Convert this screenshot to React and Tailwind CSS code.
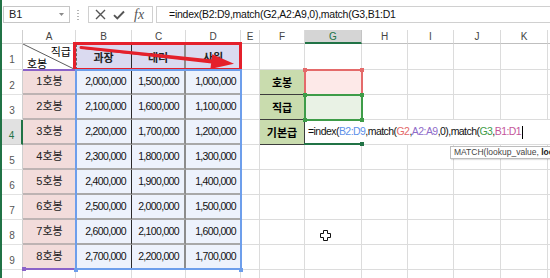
import React from "react";

const COL_LETTERS = ["A", "B", "C", "D", "E", "F", "G", "H", "I", "J", "K", ""];

const won = (n) => n.toLocaleString("en-US");

const ROWS = Array.from({ length: 8 }, (_, i) => ({
  grade: `${i + 1}호봉`,
  b: 2000000 + i * 100000,
  c: 1500000 + i * 100000,
  d: 1000000 + i * 100000,
}));

const Handle = ({ className }) => <div className={`absolute h-[4px] w-[4px] ${className}`} />;

const FormulaBar = () => (
  <div className="flex h-[30px] shrink-0 items-start pt-[6px]">
    <div className="ml-[1px] flex h-[17px] w-[67px] items-center justify-between border border-[#c6c6c6] pl-[5px] pr-[5px] text-[11px] text-[#222]">
      <span>B1</span>
      <svg width="5" height="3" viewBox="0 0 5 3">
        <path d="M0 0h5L2.5 3z" fill="#8a8a8a" />
      </svg>
    </div>
    <div className="ml-[7px] mt-[4px] flex flex-col gap-[2px]">
      <div className="h-[1px] w-[2px] bg-[#b5b5b5]" />
      <div className="h-[1px] w-[2px] bg-[#b5b5b5]" />
      <div className="h-[1px] w-[2px] bg-[#b5b5b5]" />
      <div className="h-[1px] w-[2px] bg-[#b5b5b5]" />
    </div>
    <div className="ml-[9px] flex h-[17px] w-[65px] items-center border border-[#d0d0d0] pl-[6px]">
      <svg width="11" height="11" viewBox="0 0 11 11">
        <path d="M1 1l9 9M10 1l-9 9" stroke="#555" strokeWidth="1.4" />
      </svg>
      <svg className="ml-[7px]" width="12" height="10" viewBox="0 0 12 10">
        <path d="M1 5.2l3.3 3.3L11 1.5" stroke="#555" strokeWidth="1.9" fill="none" />
      </svg>
      <span className="ml-[9px] font-['Liberation_Serif',serif] text-[14px] italic leading-none text-[#555]">fx</span>
    </div>
    <div className="ml-[3px] flex h-[17px] flex-1 items-center whitespace-nowrap border border-r-0 border-[#d0d0d0] pl-[12px] text-[10.5px] tracking-[-0.25px] text-[#111]">
      <span>=index(B2:D9,match(G2,A2:A9,0),match(G3,B1:D1</span>
    </div>
  </div>
);

const Sheet = () => {
  const grid = "border-r border-b border-[#dcdcdc]";
  const rowHead = (n) => (
    <div
      key={`rh${n}`}
      className={`flex items-center justify-center pt-[6px] text-[10px] ${
        n === 4
          ? "border-b border-r-2 border-b-[#cfcfcf] border-r-[#217346] bg-[#e1e1e1] text-[#217346]"
          : "border-r border-b border-r-[#cfcfcf] border-b-[#e2e2e2] text-[#555]"
      }`}
    >
      {n}
    </div>
  );
  const blank = (key) => <div key={key} className={`${grid} bg-white`} />;

  return (
    <div className="grid grid-cols-[21px_53px_56px_54px_55px_19px_45px_57px_46px_46px_47px_47px_12px] grid-rows-[14px_26px_25px_25px_25px_25px_25px_25px_25px_25px_20px] text-[11px] text-black">
      {/* column headers */}
      <div className="border-r border-b border-[#cfcfcf]" />
      {COL_LETTERS.map((l) => (
        <div
          key={`ch${l}`}
          className={`flex items-center justify-center text-[10px] ${
            l === "G"
              ? "border-r border-b-2 border-r-[#c4c4c4] border-b-[#217346] bg-[#d5d5d5] text-[#217346]"
              : "border-r border-b border-r-[#dadada] border-b-[#bfbfbf] text-[#444]"
          }`}
        >
          {l}
        </div>
      ))}

      {/* row 1 */}
      {rowHead(1)}
      <div className="relative flex flex-col justify-between border-r border-[#d4d4d4] bg-white px-[4px] pb-[1px] pt-[1px] font-['Noto_Sans_CJK_KR',sans-serif] text-[11px] leading-[12px]">
        <svg className="absolute inset-0" width="53" height="26" viewBox="0 0 53 26">
          <path d="M0 0L53 26" stroke="#333" strokeWidth="0.8" />
        </svg>
        <span className="self-end">직급</span>
        <span className="self-start">호봉</span>
      </div>
      {["과장", "대리", "사원"].map((t, i) => (
        <div
          key={t}
          className={`flex items-center justify-center border-b border-b-[#8c8c8c] bg-[#dadaf0] pt-[1px] font-['Noto_Sans_CJK_KR',sans-serif] font-bold text-[#222] ${
            i === 0 ? "border-r border-r-[#2a2a2a]" : i === 1 ? "border-r-2 border-r-[#8c8c8c]" : "border-r border-r-[#8c8c8c]"
          }`}
        >
          {t}
        </div>
      ))}
      {["E", "F", "G", "H", "I", "J", "K", "L"].map((c) => blank(`r1${c}`))}

      {/* rows 2 - 9 */}
      {ROWS.map((row, i) => {
        const r = i + 2;
        const num =
          "flex items-center justify-end border-b-2 border-b-[#a8a8a8] bg-[#edf2fc] pr-[5px] text-[10.5px] tracking-[-0.65px] text-[#111]";
        let rest;
        if (r === 2 || r === 3) {
          rest = [
            blank(`e${r}`),
            <div
              key={`f${r}`}
              className="flex items-center justify-center border-r border-b border-[#3c3c3c] bg-[#c9dcae] font-['Noto_Sans_CJK_KR',sans-serif] font-bold"
            >
              {r === 2 ? "호봉" : "직급"}
            </div>,
            <div key={`g${r}`} className={`${grid} ${r === 2 ? "bg-[#fde9e8]" : "bg-[#e9f2e5]"}`} />,
            ...["H", "I", "J", "K", "L"].map((c) => blank(`${c}${r}`)),
          ];
        } else if (r === 4) {
          rest = [
            blank("e4"),
            <div
              key="f4"
              className="flex items-center justify-center border-r border-b border-[#3c3c3c] bg-[#c9dcae] font-['Noto_Sans_CJK_KR',sans-serif] font-bold"
            >
              기본급
            </div>,
            <div
              key="g4"
              className="col-span-6 flex items-center whitespace-nowrap border-b border-[#dcdcdc] bg-white pl-[3px] text-[10.5px] tracking-[-0.55px] text-[#111]"
            >
              <span>=index(</span>
              <span className="text-[#5d8fe8]">B2:D9</span>
              <span>,match(</span>
              <span className="text-[#e46a6a]">G2</span>
              <span>,</span>
              <span className="text-[#8f6cc9]">A2:A9</span>
              <span>,0),match(</span>
              <span className="text-[#3e9c48]">G3</span>
              <span>,</span>
              <span className="text-[#c4569a]">B1:D1</span>
              <span className="ml-[1px] h-[13px] w-[1px] bg-black" />
            </div>,
          ];
        } else {
          rest = ["E", "F", "G", "H", "I", "J", "K", "L"].map((c) => blank(`${c}${r}`));
        }
        return (
          <React.Fragment key={r}>
            {rowHead(r)}
            <div className="flex items-center justify-center border-b-2 border-b-[#bdb3b3] bg-[#f2dcdb] text-[11px] text-[#222]">
              {row.grade}
            </div>
            <div className={`${num} border-r border-r-[#2a2a2a]`}>{won(row.b)}</div>
            <div className={`${num} border-r-2 border-r-[#8c8c8c]`}>{won(row.c)}</div>
            <div className={num}>{won(row.d)}</div>
            {rest}
          </React.Fragment>
        );
      })}

      {/* row 10 */}
      {rowHead(10)}
      {["A", "B", "C", "D", "E", "F", "G", "H", "I", "J", "K", "L"].map((c) => blank(`r10${c}`))}
    </div>
  );
};

export default function App() {
  return (
    <div className="relative flex h-[278px] w-[550px] overflow-hidden bg-white font-['Liberation_Sans','Noto_Sans_CJK_KR',sans-serif]">
      <div className="w-[2px] shrink-0 bg-[#217346]" />
      <div className="flex min-w-0 flex-1 flex-col">
        <FormulaBar />
        <Sheet />
      </div>

      {/* copy marquee on B1:D1 */}
      <div className="pointer-events-none absolute left-[76px] top-[44px] h-[26px] w-[165px] border border-dashed border-[#666]" />
      {/* red annotation box */}
      <div className="pointer-events-none absolute left-[73px] top-[42px] h-[29px] w-[169px] border-[3px] border-[#e4202b]" />

      {/* A2:A9 reference (purple) */}
      <div className="pointer-events-none absolute left-[23px] top-[69px] h-[2px] w-[53px] bg-[#8b62c8]" />
      <div className="pointer-events-none absolute left-[23px] top-[268px] h-[2px] w-[53px] bg-[#8b62c8]" />
      <Handle className="left-[22px] top-[267px] bg-[#8b62c8]" />

      {/* B2:D9 reference (blue) */}
      <div className="pointer-events-none absolute left-[75px] top-[69px] h-[201px] w-[167px] border-2 border-[#6d9eeb]" />
      <Handle className="left-[74px] top-[268px] bg-[#6d9eeb]" />
      <Handle className="left-[239px] top-[268px] bg-[#6d9eeb]" />

      {/* G2 reference (red) */}
      <div className="pointer-events-none absolute left-[304px] top-[69px] h-[27px] w-[59px] border-2 border-[#e46a6a]" />
      <Handle className="left-[303px] top-[68px] bg-[#e46a6a]" />
      <Handle className="left-[360px] top-[68px] bg-[#e46a6a]" />
      {/* G3 reference (green) */}
      <div className="pointer-events-none absolute left-[304px] top-[94px] h-[27px] w-[59px] border-2 border-[#3e9c48]" />
      <Handle className="left-[303px] top-[93px] bg-[#3e9c48]" />
      <Handle className="left-[360px] top-[93px] bg-[#3e9c48]" />
      <Handle className="left-[303px] top-[118px] bg-[#3e9c48]" />
      <Handle className="left-[360px] top-[118px] bg-[#3e9c48]" />
      {/* active cell G4 */}
      <div className="pointer-events-none absolute left-[304px] top-[143px] h-[2px] w-[59px] bg-[#217346]" />
      <Handle className="left-[360px] top-[142px] bg-[#217346]" />

      {/* function tooltip */}
      <div className="absolute left-[450px] top-[146px] flex h-[13px] items-center whitespace-nowrap border border-[#bdbdbd] bg-white pl-[3px] pr-[20px] text-[8.5px] text-[#444] shadow-[1px_1px_1px_rgba(0,0,0,0.12)]">
        MATCH(lookup_value,&nbsp;<b className="text-[#222]">lookup_array</b>
      </div>

      {/* red arrow */}
      <svg className="pointer-events-none absolute left-0 top-0" width="550" height="278" viewBox="0 0 550 278">
        <path d="M82 47.2L212 60.2L211.6 63.4L82 48.8z" fill="#e4202b" />
        <path d="M81 47.5L212 61" stroke="#e4202b" strokeWidth="3" strokeLinecap="round" />
        <path d="M234 63.8L210.4 69L212.2 54.2z" fill="#e4202b" />
      </svg>

      {/* mouse cursor */}
      <svg className="pointer-events-none absolute left-[320px] top-[230px]" width="11" height="11" viewBox="0 0 11 11">
        <path d="M3.5 0.5h4v3h3v4h-3v3h-4v-3h-3v-4h3z" fill="#fff" stroke="#111" strokeWidth="1" />
      </svg>
    </div>
  );
}
